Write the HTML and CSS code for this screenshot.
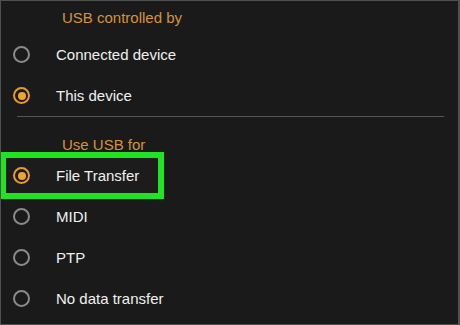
FILE: index.html
```html
<!DOCTYPE html>
<html lang="en">
<head>
    <meta charset="UTF-8">
    <title>USB preferences</title>
    <link rel="stylesheet" href="styles.css">
</head>
<body>
<div class="screen">
    <div class="section-title first">USB controlled by</div>
    <div class="option">
        <span class="radio"></span>
        <span class="label">Connected device</span>
    </div>
    <div class="option">
        <span class="radio checked"></span>
        <span class="label">This device</span>
    </div>

    <div class="divider"></div>

    <div class="section-title">Use USB for</div>
    <div class="option highlighted">
        <span class="highlight"></span>
        <span class="radio checked"></span>
        <span class="label">File Transfer</span>
    </div>
    <div class="option">
        <span class="radio"></span>
        <span class="label">MIDI</span>
    </div>
    <div class="option">
        <span class="radio"></span>
        <span class="label">PTP</span>
    </div>
    <div class="option">
        <span class="radio"></span>
        <span class="label">No data transfer</span>
    </div>
</div>
</body>
</html>
```

FILE: styles.css
```css
body {
    margin: 0;
    background: #1a1a1a;
    font-family: "Liberation Sans", Arial, sans-serif;
}

.screen {
    box-sizing: border-box;
    width: 460px;
    height: 325px;
    border: 1px solid #505050;
    border-right-width: 2px;
    background: #1a1a1a;
    display: flex;
    flex-direction: column;
    overflow: hidden;
}

.section-title {
    color: #d4923c;
    font-size: 15px;
    line-height: 17px;
    padding: 19px 0 0 61px;
    height: 38px;
    box-sizing: border-box;
    flex-shrink: 0;
}

.section-title.first {
    padding-top: 8px;
    height: 33px;
}

.option {
    position: relative;
    height: 41px;
    display: flex;
    align-items: center;
    padding-left: 12px;
    flex-shrink: 0;
}

.radio {
    box-sizing: border-box;
    width: 17px;
    height: 17px;
    border: 2px solid #8a8a8a;
    border-radius: 50%;
    display: flex;
    align-items: center;
    justify-content: center;
    flex-shrink: 0;
    z-index: 1;
}

.radio.checked {
    border-color: #e29b34;
}

.radio.checked::after {
    content: "";
    width: 8px;
    height: 8px;
    border-radius: 50%;
    background: #f0a52c;
}

.label {
    margin-left: 26px;
    color: #f0f0f0;
    font-size: 15px;
    z-index: 1;
}

.divider {
    height: 1px;
    background: #555;
    margin: 0 14px 0 16px;
    flex-shrink: 0;
}

/* green annotation box round the chosen option */
.highlight {
    position: absolute;
    left: -1px;
    top: -3px;
    width: 164px;
    height: 47px;
    box-sizing: border-box;
    border: 6px solid #22e322;
    background: #1c1c1c;
}
```
